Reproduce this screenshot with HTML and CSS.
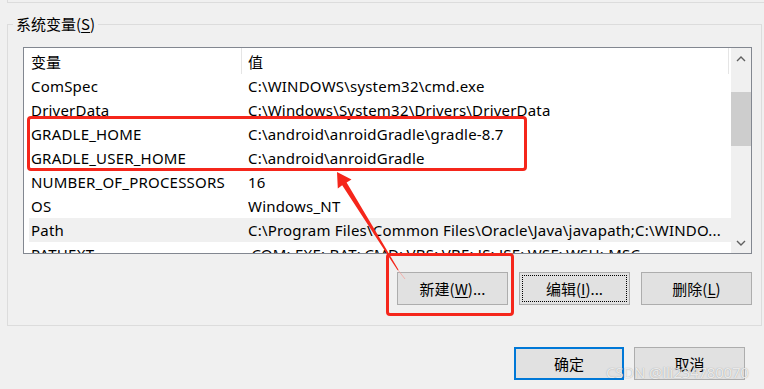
FILE: index.html
```html
<!DOCTYPE html>
<html lang="zh-CN">
<head>
<meta charset="utf-8">
<title>系统变量</title>
<link rel="stylesheet" href="styles.css">
</head>
<body>
<div class="prev-group"></div>
<fieldset class="group">
  <legend class="group-title">系统变量(<u>S</u>)</legend>
  <div class="listbox">
    <div class="list-main">
      <div class="list-head">
        <div class="hcell hcell-name">变量</div>
        <div class="hcell hcell-value">值</div>
      </div>
      <div class="list-rows">
        <div class="row"><span class="cell-name">ComSpec</span><span class="cell-value">C:\WINDOWS\system32\cmd.exe</span></div>
        <div class="row"><span class="cell-name">DriverData</span><span class="cell-value">C:\Windows\System32\Drivers\DriverData</span></div>
        <div class="row"><span class="cell-name">GRADLE_HOME</span><span class="cell-value">C:\android\anroidGradle\gradle-8.7</span></div>
        <div class="row"><span class="cell-name">GRADLE_USER_HOME</span><span class="cell-value">C:\android\anroidGradle</span></div>
        <div class="row"><span class="cell-name">NUMBER_OF_PROCESSORS</span><span class="cell-value">16</span></div>
        <div class="row"><span class="cell-name">OS</span><span class="cell-value">Windows_NT</span></div>
        <div class="row row-hover"><span class="cell-name">Path</span><span class="cell-value">C:\Program Files\Common Files\Oracle\Java\javapath;C:\WINDO...</span></div>
        <div class="row"><span class="cell-name">PATHEXT</span><span class="cell-value">.COM;.EXE;.BAT;.CMD;.VBS;.VBE;.JS;.JSE;.WSF;.WSH;.MSC</span></div>
      </div>
    </div>
    <div class="scrollbar">
      <div class="sb-btn">
        <svg width="10" height="6" viewBox="0 0 10 6"><path d="M1 5 L5 1 L9 5" fill="none" stroke="#606060" stroke-width="1.4"/></svg>
      </div>
      <div class="sb-track"><div class="sb-thumb"></div></div>
      <div class="sb-btn">
        <svg width="10" height="6" viewBox="0 0 10 6"><path d="M1 1 L5 5 L9 1" fill="none" stroke="#606060" stroke-width="1.4"/></svg>
      </div>
    </div>
  </div>
  <div class="group-buttons">
    <button class="btn">新建(<u>W</u>)...</button>
    <button class="btn btn-focus">编辑(<u>I</u>)...</button>
    <button class="btn">删除(<u>L</u>)</button>
  </div>
</fieldset>
<div class="dialog-buttons">
  <button class="btn btn-default">确定</button>
  <button class="btn">取消</button>
</div>

<div class="anno-box anno-rows"></div>
<div class="anno-box anno-new"></div>
<svg class="anno-arrow" width="764" height="389" viewBox="0 0 764 389">
  <line x1="398" y1="270" x2="405" y2="279" stroke="#f7a6a0" stroke-width="0.8"/>
  <polygon points="337,172 351.5,179.5 346.6,182.6 398.5,269.7 397.6,270.3 342.2,185.3 337.8,188.4" fill="#f5261b"/>
</svg>
<div class="watermark">CSDN @lli234780070</div>
</body>
</html>
```

FILE: styles.css
```css
* { box-sizing: border-box; }

html, body {
  margin: 0;
  padding: 0;
}

body {
  width: 764px;
  height: 389px;
  overflow: hidden;
  background: #f0f0f0;
  font-family: "Noto Sans", "Noto Sans CJK SC", sans-serif;
  font-size: 15px;
  color: #000;
  position: relative;
}

u { text-decoration: underline; text-underline-offset: 2px; }

.prev-group {
  height: 3px;
  margin-left: 7px;
  border-left: 1px solid #dcdcdc;
  border-bottom: 1px solid #dcdcdc;
}

.group {
  margin: 11px 2px 0 7px;
  padding: 0 0 20px 0;
  border: 1px solid #dcdcdc;
  min-width: 0;
}

.group-title {
  margin-left: 5px;
  padding: 0 3px;
  line-height: 20px;
  font-family: "Noto Sans CJK SC", sans-serif;
  font-size: 15px;
}

.listbox {
  margin: 13px 0 0 15px;
  width: 729px;
  height: 207px;
  border: 1px solid #828790;
  background: #fff;
  display: flex;
  overflow: hidden;
}

.list-main {
  flex: 1;
  overflow: hidden;
}

.list-head {
  height: 26px;
  display: flex;
  align-items: stretch;
  width: 705px;
  border-right: 1px solid #e5e5e5;
}

.hcell {
  display: flex;
  align-items: center;
  font-family: "Noto Sans CJK SC", sans-serif;
  font-size: 15px;
}

.hcell-name {
  width: 218px;
  padding-left: 7px;
  border-right: 1px solid #e5e5e5;
}

.hcell-value {
  padding-left: 6px;
}

.list-rows {
  padding-left: 5px;
  letter-spacing: 0.2px;
}

.row {
  height: 24px;
  display: flex;
  align-items: center;
  white-space: nowrap;
  overflow: hidden;
}

.row-hover { background: #f0f0f0; }

.cell-name {
  width: 219px;
  flex: none;
  padding-left: 2px;
}

.cell-value {
  flex: 1;
  overflow: hidden;
}

.scrollbar {
  width: 20px;
  flex: none;
  background: #f0f0f0;
  display: flex;
  flex-direction: column;
}

.sb-btn {
  height: 21px;
  display: flex;
  align-items: center;
  justify-content: center;
}

.sb-track { flex: 1; }

.sb-thumb {
  margin-top: 23px;
  height: 54px;
  background: #cdcdcd;
}

.group-buttons {
  display: flex;
  justify-content: flex-end;
  gap: 11px;
  margin: 18px 9px 0 0;
}

.btn {
  width: 111px;
  height: 33px;
  background: #e1e1e1;
  border: 1px solid #adadad;
  border-radius: 0;
  font-family: "Noto Sans CJK SC", sans-serif;
  font-size: 15px;
  color: #000;
  padding: 0;
  display: flex;
  align-items: center;
  justify-content: center;
}

.btn-focus {
  outline: 1px dotted #000;
  outline-offset: -4px;
}

.btn-default {
  width: 110px;
  border: 2px solid #0078d7;
}

.dialog-buttons {
  display: flex;
  justify-content: flex-end;
  gap: 10px;
  margin: 21px 19px 0 0;
}

.anno-box {
  position: absolute;
  border: 3px solid #f5261b;
  border-radius: 4px;
}

.anno-rows {
  left: 27px;
  top: 116px;
  width: 500px;
  height: 55px;
}

.anno-new {
  left: 386px;
  top: 253px;
  width: 128px;
  height: 63px;
}

.anno-arrow {
  position: absolute;
  left: 0;
  top: 0;
}

.watermark {
  position: absolute;
  left: 606px;
  top: 362px;
  font-family: "Noto Sans", sans-serif;
  font-size: 15px;
  color: rgba(255, 255, 255, 0.8);
  text-shadow: 0 0 1px rgba(110, 110, 110, 0.7);
  letter-spacing: -0.2px;
}
```
